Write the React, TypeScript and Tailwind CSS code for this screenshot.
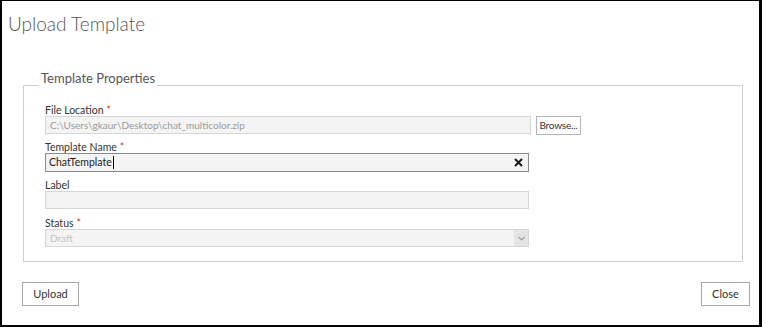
import type { JSX } from 'react'

const font = "font-['Lato','Liberation_Sans',sans-serif]"

function Req() {
  return <span className="ml-[3px] text-[#e03030]">*</span>
}

function FieldLabel({ text, required }: { text: string; required?: boolean }) {
  return (
    <div className="h-[14px] pt-[2px] text-[10.5px] leading-[12px] text-[#333]">
      {text}
      {required && <Req />}
    </div>
  )
}

function App(): JSX.Element {
  return (
    <div
      className={`${font} flex h-[327px] w-[762px] flex-col border-t border-r-[3px] border-b-2 border-l-2 border-black bg-white`}
    >
      {/* Title */}
      <h1 className="pl-[6px] pt-[10px] text-[19px] font-light leading-[26px] text-[#555]">Upload Template</h1>

      {/* Properties group */}
      <fieldset className="ml-[21px] mt-[33px] w-[720px] border border-[#d0d0d0] pb-[14px] pl-[21px] pr-0 pt-[2px]">
        {/* text sits above the border line, as in the source */}
        <legend className="-ml-[6px] px-[2px] pb-[14px] text-[13px] leading-[16px] text-[#555]">Template Properties</legend>

        {/* File Location */}
        <FieldLabel text="File Location" required />
        <div className="flex items-start gap-[5px]">
          <div className="flex h-[18px] w-[486px] items-center border border-[#d6d6d6] bg-[#f4f4f4] pl-[4px] text-[10px] text-[#9a9a9a]">
            C:\Users\gkaur\Desktop\chat_multicolor.zip
          </div>
          <button className="flex h-[19px] w-[45px] items-center justify-center border border-[#b5b5b5] bg-white px-0 text-[10px] tracking-[-0.2px] text-[#333]">
            Browse...
          </button>
        </div>

        {/* Template Name */}
        <div className="mt-[4px]">
          <FieldLabel text="Template Name" required />
          <div className="flex h-[19px] w-[484px] items-center border border-[#8c8c8c] bg-[#f4f4f4] pl-[3px] pr-[5px] text-[10.5px] text-[#222]">
            <span>ChatTemplate</span>
            <span className="ml-[1px] h-[13px] w-px bg-black" />
            <svg className="ml-auto" width="9" height="9" viewBox="0 0 9 9">
              <path d="M1 1L8 8M8 1L1 8" stroke="#1a1a1a" strokeWidth="2" />
            </svg>
          </div>
        </div>

        {/* Label */}
        <div className="mt-[5px]">
          <FieldLabel text="Label" />
          <div className="h-[18px] w-[484px] border border-[#d6d6d6] bg-[#f4f4f4]" />
        </div>

        {/* Status */}
        <div className="mt-[6px]">
          <FieldLabel text="Status" required />
          <div className="flex h-[18px] w-[484px] items-center border border-[#d6d6d6] bg-[#f4f4f4] pl-[4px] text-[10px] text-[#c2c2c2]">
            <span>Draft</span>
            <span className="ml-auto flex h-full w-[14px] items-center justify-center bg-[#e4e4e4]">
              <svg width="7" height="5" viewBox="0 0 7 5">
                <path d="M0.5 1L3.5 4L6.5 1" stroke="#9a9a9a" strokeWidth="1.2" fill="none" />
              </svg>
            </span>
          </div>
        </div>
      </fieldset>

      {/* Footer buttons */}
      <div className="mt-[20px] flex items-start justify-between pl-[20px] pr-[9px]">
        <button className="h-[24px] w-[57px] border border-[#a8a8a8] bg-white text-[11px] text-[#333]">Upload</button>
        <button className="h-[24px] w-[49px] border border-[#a8a8a8] bg-white text-[11px] text-[#333]">Close</button>
      </div>
    </div>
  )
}

export default App
